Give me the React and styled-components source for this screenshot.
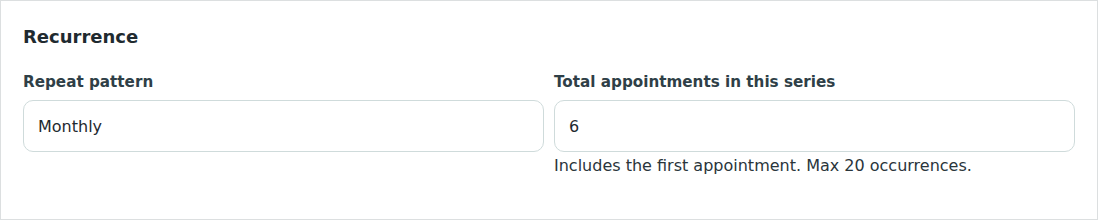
import React from "react"
import styled, { createGlobalStyle } from "styled-components"

const GlobalStyle = createGlobalStyle`
  * { box-sizing: border-box; }
  body {
    margin: 0;
    font-family: "DejaVu Sans", "Liberation Sans", sans-serif;
    background: #ffffff;
  }
`

const Card = styled.section`
  width: 1098px;
  height: 220px;
  border: 1px solid #dcdfe0;
  background: #fff;
  padding: 22px 22px;
`

const Title = styled.h2`
  margin: 2px 0 0;
  font-size: 18px;
  line-height: 24px;
  font-weight: 700;
  color: #1f2a30;
`

const Fields = styled.div`
  display: grid;
  grid-template-columns: 1fr 1fr;
  column-gap: 10px;
  margin-top: 23px;
`

const Field = styled.div`
  display: flex;
  flex-direction: column;
`

const Label = styled.label`
  font-size: 0.95rem;
  line-height: 20px;
  font-weight: 700;
  color: #2f3f47;
  margin-bottom: 8px;
`

const Input = styled.input`
  height: 52px;
  border: 1px solid #cfdbdb;
  border-radius: 10px;
  padding: 0 14px;
  font-family: inherit;
  font-size: 16px;
  color: #1f2a30;
  background: #fff;
  outline: none;
`

const Help = styled.p`
  margin: 3px 0 0;
  font-size: 16px;
  line-height: 22px;
  color: #2a353b;
`

export default function App() {
  return (
    <>
      <GlobalStyle />
      <Card>
        <Title>Recurrence</Title>
        <Fields>
          <Field>
            <Label>Repeat pattern</Label>
            <Input defaultValue="Monthly" />
          </Field>
          <Field>
            <Label>Total appointments in this series</Label>
            <Input defaultValue="6" />
            <Help>Includes the first appointment. Max 20 occurrences.</Help>
          </Field>
        </Fields>
      </Card>
    </>
  )
}
